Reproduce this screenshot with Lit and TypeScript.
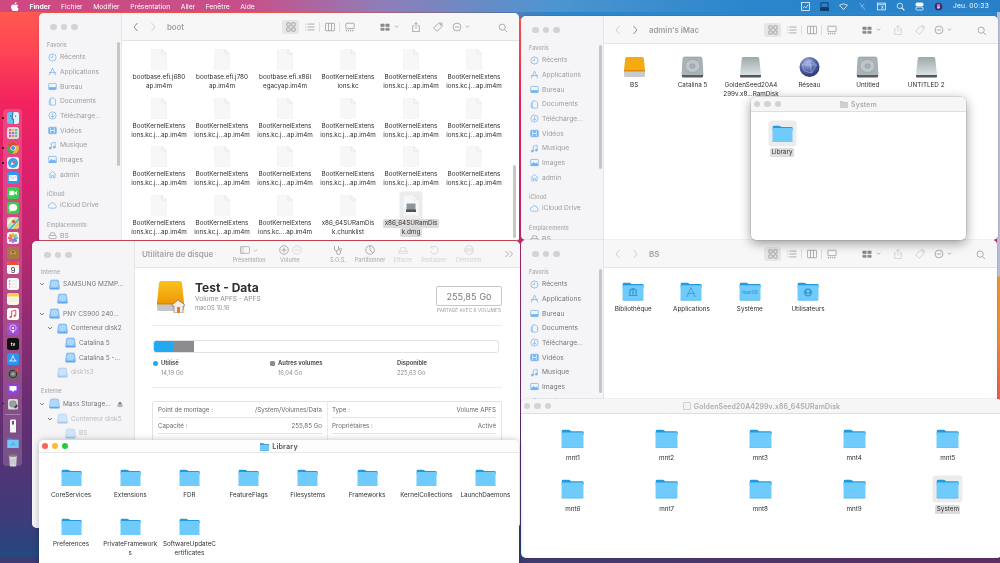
import { LitElement, html, svg, css, TemplateResult, SVGTemplateResult } from 'lit';
import { customElement } from 'lit/decorators.js';

type Item = { l: string[]; sel?: boolean };

const KC = ['BootKernelExtens', 'ions.kc.j...ap.im4m'];

const bootItems: Item[] = [
  ...Array(6).fill({ l: KC }),
  { l: ['bootbase.efi.j680', 'ap.im4m'] },
  { l: ['bootbase.efi.j780', 'ap.im4m'] },
  { l: ['bootbase.efi.x86l', 'egacyap.im4m'] },
  { l: ['BootKernelExtens', 'ions.kc'] },
  { l: KC },
  { l: KC },
  ...Array(14).fill({ l: KC }),
  { l: ['BootKernelExtens', 'ions.kc....ap.im4m'] },
  { l: ['x86_64SURamDis', 'k.chunklist'] },
  { l: ['x86_64SURamDis', 'k.dmg'], sel: true },
];

const libraryItems = [
  ['CoreServices'], ['Extensions'], ['FDR'], ['FeatureFlags'], ['Filesystems'], ['Frameworks'],
  ['KernelCollections'], ['LaunchDaemons'], ['Preferences'], ['PrivateFramework', 's'],
  ['SoftwareUpdateC', 'ertificates'],
];

const sidebarFav = ['Récents', 'Applications', 'Bureau', 'Documents', 'Télécharge...', 'Vidéos', 'Musique', 'Images', 'admin'];

const sideIcon = (name: string) => {
  const paths: Record<string, SVGTemplateResult> = {
    'Récents': svg`<circle cx="5" cy="5" r="4"/><path d="M5 2.600V5H3"/>`,
    'Applications': svg`<path d="M5 1.200 2 8M5 1.200 8 8M1 6.200h8M1 8.600h1.400M7.600 8.600H9"/>`,
    'Bureau': svg`<rect x=".8" y="1.600" width="8.400" height="6.800" rx=".8"/><rect x="1.400" y="6.200" width="7.200" height="1.800" fill="currentColor"/>`,
    'Documents': svg`<path d="M3.400 1.200h3L8.400 3v5.200a.8.8 0 0 1-.8.8H3.400a.8.8 0 0 1-.8-.8V2a.8.8 0 0 1 .8-.8z"/><path d="M2.600 3 1.400 3.600v4.600l1.600.8"/>`,
    'Télécharge...': svg`<circle cx="5" cy="5" r="4"/><path d="M5 2.600v4.600M3.200 5.400 5 7.200l1.800-1.800"/>`,
    'Vidéos': svg`<rect x=".8" y="1.400" width="8.400" height="7.200" rx=".8" fill="currentColor"/><path d="M3 2v6M7 2v6M3 5h4" stroke="#fff"/>`,
    'Musique': svg`<path d="M3.600 7.800V2.400l4.400-1v5.400"/><ellipse cx="2.600" cy="7.900" rx="1.200" ry="1" fill="currentColor"/><ellipse cx="7" cy="6.900" rx="1.200" ry="1" fill="currentColor"/>`,
    'Images': svg`<rect x=".8" y="1.600" width="8.400" height="6.800" rx=".6"/><path d="M1 8 3.800 4.600 5.600 6.600 7 5.400 9 7.600V8.300H1z" fill="currentColor"/>`,
    'admin': svg`<path d="M1 5.200 5 1.600l4 3.600M2.200 4.600V8.800H4V6.200h2v2.600h1.800V4.600"/>`,
    'iCloud Drive': svg`<path d="M2.800 8h4.800a1.900 1.900 0 0 0 .3-3.700A2.900 2.900 0 0 0 2.400 3.600 2.200 2.200 0 0 0 2.800 8z"/>`,
    'BS': svg`<rect x="1" y="5" width="8" height="3.400" rx=".6"/><path d="M2 5 3 2h4l1 3"/>`,
  };
  return html`<svg class="si ${name === 'BS' ? 'gray' : ''}" viewBox="0 0 10 10">${paths[name]}</svg>`;
};

const folder = (glyph?: string) => html`<svg class="folder" viewBox="0 0 64 54">
  <path d="M2 9V6q0-4 4-4h15q3 0 5 2l2 2h31q4 0 4 4v6H2z" fill="#239ade"/>
  <rect x="1.500" y="9.500" width="61" height="44" rx="3" fill="#6fcbfb"/>
  <path d="M2 51q0 2.500 3 2.500h54q3 0 3-2.500" fill="none" stroke="#4eaee6" stroke-width="1.500"/>
  ${glyph === 'lib' ? svg`<path d="M32 17l13 6v2H19v-2zM21 26h4v11h-4zM30 26h4v11h-4zM39 26h4v11h-4zM19 38h26v3H19z" fill="#3a9ad6"/>` : ''}
  ${glyph === 'app' ? svg`<path d="M32 16 22 40M32 16l10 24M20 33h24M18 41h6M40 41h6" stroke="#3a9ad6" stroke-width="2.400" fill="none"/>` : ''}
  ${glyph === 'sys' ? svg`<text x="32" y="35" text-anchor="middle" font-size="13" font-weight="700" font-family="Inter, sans-serif" fill="#3a9ad6">macOS</text>` : ''}
  ${glyph === 'usr' ? svg`<circle cx="32" cy="30" r="12" fill="#3a9ad6"/><circle cx="32" cy="27" r="4.500" fill="#6fcbfb"/><path d="M24 38q8-8 16 0" fill="#6fcbfb"/>` : ''}
</svg>`;

const doc = (dmg = false) => html`<svg class="doc" viewBox="0 0 32 42">
  <path d="M1 1h21l9 9v31H1z" fill="#f7f7f7" stroke="#efefef"/>
  <path d="M22 1.500v8.500h8.500z" fill="#fdfdfd" stroke="#d6d6d6" stroke-width="1"/>
  ${dmg ? svg`<rect x="7" y="17" width="18" height="15" rx="1.500" fill="#8c959b"/><rect x="6" y="29" width="20" height="5" rx="1" fill="#4d5256"/>` : ''}
</svg>`;

const drive = (kind: string) => {
  if (kind === 'orange') {
    return html`<svg class="drive" viewBox="0 0 46 44">
      <path d="M7 2h32q2 0 2.500 3L44 28H2L4.500 5Q5 2 7 2z" fill="#f4ab12"/>
      <path d="M2 28h42v11q0 3-3 3H5q-3 0-3-3z" fill="#c9cace"/>
      <path d="M2 28h42v3H2z" fill="#dc8c0c"/>
    </svg>`;
  }
  if (kind === 'globe') {
    return html`<svg class="drive" viewBox="0 0 46 44">
      <defs><radialGradient id="gl" cx=".4" cy=".3" r=".8"><stop offset="0" stop-color="#a9b9e6"/><stop offset=".55" stop-color="#4c5fa6"/><stop offset="1" stop-color="#1d2455"/></radialGradient></defs>
      <circle cx="23" cy="22" r="20" fill="url(#gl)"/>
      <path d="M8 18 23 8l14 10-10 16-14-4zM23 8l4 26M8 18l29 0" stroke="#d7def5" stroke-width=".8" fill="none"/>
    </svg>`;
  }
  if (kind === 'hdd') {
    return html`<svg class="drive" viewBox="0 0 46 44">
      <path d="M7 2h32q2.500 0 3 3l2 35H2L4 5q.5-3 3-3z" fill="#a9b3b8" stroke="#7d878c"/>
      <ellipse cx="23" cy="20" rx="15" ry="13" fill="#bcc6cb" stroke="#8b959a"/>
      <ellipse cx="23" cy="20" rx="5" ry="4.500" fill="#a9b3b8" stroke="#7d878c"/>
      <path d="M2 38h42v3q0 2-2 2H4q-2 0-2-2z" fill="#585d61"/>
    </svg>`;
  }
  return html`<svg class="drive" viewBox="0 0 46 44">
    <defs><linearGradient id="vg" x1="0" x2="0" y1="0" y2="1"><stop offset="0" stop-color="#9fa8a9"/><stop offset="1" stop-color="#d7e2e6"/></linearGradient></defs>
    <path d="M8 2h30q2 0 2.500 3L44 38H2L5.500 5Q6 2 8 2z" fill="url(#vg)"/>
    <path d="M2 38h42v3q0 2-2 2H4q-2 0-2-2z" fill="#55595a"/>
  </svg>`;
};

const blueDisk = (plain = false) => html`<svg class="bd" viewBox="0 0 22 22">
  <path d="M5 2h12q1.500 0 2 2l2 14H1L3 4q.5-2 2-2z" fill="${plain ? '#b4d8fa' : '#94c9f9'}" stroke="#5aa6f0"/>
  ${plain ? '' : svg`<ellipse cx="11" cy="10" rx="5.500" ry="4.500" fill="none" stroke="#eaf4ff" stroke-width="1.300"/><circle cx="11" cy="10" r="1.500" fill="#eaf4ff"/>`}
  <path d="M1 18h20v1.500q0 1.500-1.500 1.500h-17Q1 21 1 19.500z" fill="#5aa6f0"/>
</svg>`;

const dockIcons: TemplateResult[] = [
  html`<svg viewBox="0 0 12 12"><rect width="12" height="12" rx="2.500" fill="#5fc3f6"/><path d="M6 0h3.500Q12 0 12 2.500v7Q12 12 9.500 12H6z" fill="#dff1fb"/><path d="M6 0 5 7h1.500L6.500 12" fill="none" stroke="#24436b" stroke-width=".7"/><circle cx="3.500" cy="4" r=".6" fill="#24436b"/><circle cx="8.500" cy="4" r=".6" fill="#24436b"/></svg>`,
  html`<svg viewBox="0 0 12 12"><rect width="12" height="12" rx="2.500" fill="#e4dbe3"/><rect x="2" y="2" width="2.200" height="2.200" fill="#ef6a62"/><rect x="5" y="2" width="2.200" height="2.200" fill="#f3b33f"/><rect x="8" y="2" width="2.200" height="2.200" fill="#6cc45b"/><rect x="2" y="5" width="2.200" height="2.200" fill="#e2589a"/><rect x="5" y="5" width="2.200" height="2.200" fill="#5a8ce8"/><rect x="8" y="5" width="2.200" height="2.200" fill="#49bdd1"/><rect x="2" y="8" width="2.200" height="2.200" fill="#9a6be0"/><rect x="5" y="8" width="2.200" height="2.200" fill="#ef8e4a"/><rect x="8" y="8" width="2.200" height="2.200" fill="#6cc45b"/></svg>`,
  html`<svg viewBox="0 0 12 12"><circle cx="6" cy="6" r="6" fill="#e2b93b"/><path d="M6 0a6 6 0 0 0-5.200 3L3.500 8 6 3.500h5.200A6 6 0 0 0 6 0z" fill="#d9473e"/><path d="M.8 3a6 6 0 0 0 4.400 9L8 7.500 3.500 8z" fill="#3aa757"/><circle cx="6" cy="6" r="2.600" fill="#fff"/><circle cx="6" cy="6" r="2" fill="#4a8af4"/></svg>`,
  html`<svg viewBox="0 0 12 12"><rect width="12" height="12" rx="2.500" fill="#eef3f8"/><circle cx="6" cy="6" r="5" fill="#3aa2ec"/><path d="M8.500 3.500 5 5 3.500 8.500 7 7z" fill="#fff"/><path d="M8.500 3.500 5 5l2 2z" fill="#e8473e"/></svg>`,
  html`<svg viewBox="0 0 12 12"><rect width="12" height="12" rx="2.500" fill="#2a9bf0"/><rect x="1.800" y="3" width="8.400" height="6" rx=".6" fill="#f5f8fc"/><path d="M1.800 3.400 6 6.600l4.200-3.200" fill="none" stroke="#8bb0d6" stroke-width=".6"/></svg>`,
  html`<svg viewBox="0 0 12 12"><rect width="12" height="12" rx="2.500" fill="#37cd4e"/><rect x="2" y="3.800" width="5.400" height="4.400" rx="1" fill="#fff"/><path d="M7.800 5.500 10 4v4L7.800 6.500z" fill="#fff"/></svg>`,
  html`<svg viewBox="0 0 12 12"><rect width="12" height="12" rx="2.500" fill="#3ccb4e"/><ellipse cx="6" cy="5.600" rx="4.200" ry="3.500" fill="#fff"/><path d="M3 8 2.600 10 5 8.800z" fill="#fff"/></svg>`,
  html`<svg viewBox="0 0 12 12"><rect width="12" height="12" rx="2.500" fill="#bfe6a6"/><path d="M0 5 5 0h3L0 9z" fill="#f5f1e4"/><path d="M6 12 12 4v4l-3 4z" fill="#f3c64a"/><path d="M3 12 12 2" stroke="#4a9bed" stroke-width="1.200"/><circle cx="6.500" cy="4.500" r="1.600" fill="#e2483f"/></svg>`,
  html`<svg viewBox="0 0 12 12"><rect width="12" height="12" rx="2.500" fill="#f7f4f6"/><g opacity=".9"><ellipse cx="6" cy="3" rx="1.400" ry="2.300" fill="#f2b033"/><ellipse cx="9" cy="6" rx="2.300" ry="1.400" fill="#57b3e6"/><ellipse cx="6" cy="9" rx="1.400" ry="2.300" fill="#a66bd6"/><ellipse cx="3" cy="6" rx="2.300" ry="1.400" fill="#e85a50"/><ellipse cx="8.100" cy="3.900" rx="1.400" ry="2.300" transform="rotate(45 8.100 3.900)" fill="#8cc850"/><ellipse cx="8.100" cy="8.100" rx="1.400" ry="2.300" transform="rotate(-45 8.100 8.100)" fill="#4f7be0"/><ellipse cx="3.900" cy="8.100" rx="1.400" ry="2.300" transform="rotate(45 3.900 8.100)" fill="#e2599d"/><ellipse cx="3.900" cy="3.900" rx="1.400" ry="2.300" transform="rotate(-45 3.900 3.900)" fill="#ef8a3c"/></g></svg>`,
  html`<svg viewBox="0 0 12 12"><rect width="12" height="12" rx="2" fill="#a9773f"/><circle cx="6" cy="6" r="3.400" fill="#c4975f" stroke="#8a5f2e" stroke-width=".5"/><circle cx="6" cy="5" r="1.300" fill="#8a5f2e"/><path d="M3.800 8.400q2.200-2.500 4.400 0" fill="#8a5f2e"/></svg>`,
  html`<svg viewBox="0 0 12 12"><rect width="12" height="12" rx="2.500" fill="#fafafa"/><path d="M0 2.500Q0 0 2.500 0h7Q12 0 12 2.500V3H0z" fill="#ee4b3f"/><text x="6" y="10.500" text-anchor="middle" font-size="7.500" font-family="Inter, sans-serif" fill="#222">9</text></svg>`,
  html`<svg viewBox="0 0 12 12"><rect width="12" height="12" rx="2.500" fill="#fafafa"/><circle cx="2.600" cy="3" r=".8" fill="#3a8dee"/><circle cx="2.600" cy="6" r=".8" fill="#ee5f4d"/><circle cx="2.600" cy="9" r=".8" fill="#f0a936"/><path d="M4.500 3H10M4.500 6H10M4.500 9H10" stroke="#c9c9c9" stroke-width=".5"/></svg>`,
  html`<svg viewBox="0 0 12 12"><rect width="12" height="12" rx="2.500" fill="#fbf7e8"/><path d="M0 2.500Q0 0 2.500 0h7Q12 0 12 2.500V3.600H0z" fill="#f6cf45"/><path d="M1 6h10M1 8h10" stroke="#dcd8c9" stroke-width=".4"/></svg>`,
  html`<svg viewBox="0 0 12 12"><rect width="12" height="12" rx="2.500" fill="#fdfdfd"/><path d="M4.600 8.800V3.200l4.200-1v5.500" fill="none" stroke="#f0384e" stroke-width=".9"/><ellipse cx="3.600" cy="8.900" rx="1.200" ry="1" fill="#f0384e"/><ellipse cx="7.700" cy="7.800" rx="1.200" ry="1" fill="#f0384e"/></svg>`,
  html`<svg viewBox="0 0 12 12"><rect width="12" height="12" rx="2.500" fill="#a34ed8"/><path d="M5.200 7h1.600l-.3 3h-1z" fill="#fff"/><circle cx="6" cy="5" r="3.200" fill="none" stroke="#fff" stroke-width=".6"/><circle cx="6" cy="5" r="1.100" fill="#fff"/></svg>`,
  html`<svg viewBox="0 0 12 12"><rect width="12" height="12" rx="2.500" fill="#111"/><text x="6" y="8" text-anchor="middle" font-size="4.500" font-weight="700" font-family="Inter, sans-serif" fill="#fff">tv</text></svg>`,
  html`<svg viewBox="0 0 12 12"><rect width="12" height="12" rx="2.500" fill="#2c93f1"/><path d="M6.300 2.500 3.400 8M5.400 2.500 8.600 8M2.400 8H9.600" stroke="#fff" stroke-width=".8" fill="none"/></svg>`,
  html`<svg viewBox="0 0 12 12"><circle cx="6" cy="6" r="5.800" fill="#6e6e72"/><circle cx="6" cy="6" r="3.800" fill="none" stroke="#2e2e30" stroke-width="1.100"/><circle cx="6" cy="6" r="1.600" fill="#a9a9ad"/><circle cx="9.800" cy="2.200" r="1.900" fill="#ee3f36"/></svg>`,
  html`<svg viewBox="0 0 12 12"><rect width="12" height="12" rx="2.500" fill="#8e44cf"/><path d="M2.500 3h7v4.500H7L6 9.500 5 7.500H2.500z" fill="#fff"/></svg>`,
  html`<svg viewBox="0 0 12 12"><rect x="1" y="1" width="10" height="10.500" rx="1.500" fill="#d9d9d9"/><ellipse cx="6" cy="6" rx="3.400" ry="3.200" fill="#9ba3a6" stroke="#5c6366" stroke-width=".4"/><path d="M7 9.500 9.500 6.500l1.500 1-2 3z" fill="#3c4145"/></svg>`,
];

const dockTail = [
  html`<svg viewBox="0 0 12 14"><path d="M3 1.500Q3 .5 4 .5h4q1 0 1 1V13q0 .5-.5.5h-5Q3 13.500 3 13z" fill="#f4f4f4"/><rect x="5" y="2" width="2" height="3.500" fill="#5b5b5b"/></svg>`,
  html`<svg viewBox="0 0 13 12"><path d="M.5 2Q.500 1 1.500 1h3.500l1 1h6q.500 0 .500 1v1H.500z" fill="#2ba0e4"/><rect x=".3" y="2.800" width="12.400" height="8.700" rx=".6" fill="#72c9f8"/><path d="M6.500 4.500 4.500 9M6.500 4.500 8.500 9M4 7.800H9" stroke="#3b9ad8" stroke-width=".5" fill="none"/></svg>`,
  html`<svg viewBox="0 0 12 14"><path d="M2 2h8l-.8 10.500q0 1-1 1H3.800q-1 0-1-1z" fill="#d8d8da" stroke="#8b8b90" stroke-width=".3"/><path d="M4 5.500l.3 6M6 5.500v6M8 5.500l-.3 6" stroke="#9b9ba0" stroke-width=".4"/><ellipse cx="6" cy="2.200" rx="4.300" ry="1.500" fill="#75757a"/><path d="M3.500 2.600h5" stroke="#e85a50" stroke-width=".6"/></svg>`,
];

const tb = (name: string, on = true) => {
  const shapes: Record<string, TemplateResult> = {
    grid: html`<svg class="tic" viewBox="0 0 12 12"><rect x="1" y="1" width="4" height="4" rx=".5"/><rect x="7" y="1" width="4" height="4" rx=".5"/><rect x="1" y="7" width="4" height="4" rx=".5"/><rect x="7" y="7" width="4" height="4" rx=".5"/></svg>`,
    list: html`<svg class="tic" viewBox="0 0 12 12"><path d="M3 2.500h8.500M3 6h8.500M3 9.500h8.500M.5 2.500h1M.5 6h1M.5 9.500h1"/></svg>`,
    cols: html`<svg class="tic" viewBox="0 0 12 12"><rect x=".5" y="1.500" width="11" height="9" rx=".8"/><path d="M4.200 1.500v9M7.800 1.500v9"/></svg>`,
    gallery: html`<svg class="tic" viewBox="0 0 12 12"><rect x="1" y="1.500" width="10" height="6.500" rx=".7"/><path d="M1 10.500h1.400M3.500 10.500h1.400M6 10.500h1.400M8.500 10.500h1.400" stroke-width="1.200"/></svg>`,
    group: html`<svg class="tic" viewBox="0 0 12 12"><path d="M1 2.500h4v3H1zM7 2.500h4v3H7zM1 7.500h4v2.500H1zM7 7.500h4v2.500H7z" fill="currentColor"/></svg>`,
    caret: html`<svg class="tic caret" viewBox="0 0 6 6"><path d="M1 2l2 2 2-2"/></svg>`,
    share: html`<svg class="tic" viewBox="0 0 12 12"><path d="M3.500 4.500H2v7h8v-7H8.500M6 8V.7M4 2.500 6 .7l2 1.800"/></svg>`,
    tag: html`<svg class="tic" viewBox="0 0 12 12"><path d="M7 1.200h3.300q.6 0 .6.6V5L5.400 10.900q-.4.400-.8 0L1.100 7.400q-.4-.4 0-.8z"/><circle cx="8.900" cy="3.200" r=".6"/></svg>`,
    action: html`<svg class="tic" viewBox="0 0 12 12"><circle cx="6" cy="6" r="4.700"/><path d="M3.500 6h5"/></svg>`,
    search: html`<svg class="tic" viewBox="0 0 12 12"><circle cx="5" cy="5" r="3.700"/><path d="M7.800 7.800 11 11"/></svg>`,
  };
  return html`<span class="tb ${on ? '' : 'off'}">${shapes[name]}</span>`;
};

@customElement('app-root')
export class AppRoot extends LitElement {
  static styles = css`
    :host {
      display: block;
      width: 1000px;
      height: 563px;
      overflow: hidden;
      font-family: Inter, 'Liberation Sans', sans-serif;
      color: #333;
    }
    .desk {
      position: relative;
      width: 1000px;
      height: 563px;
      overflow: hidden;
      filter: blur(.35px);
      background:
        linear-gradient(180deg, #b6bcd3 0, #b6bcd3 276px, #e8932f 277px, #e88b3a 335px, #e65c45 400px, #5b2f62 401px) right / 3px 100% no-repeat,
        linear-gradient(90deg, #3f3a72 520px, #5c2f60 1000px) 0 558px / 100% 5px no-repeat,
        linear-gradient(90deg, transparent 280px, #2b86cc 560px) 0 0 / 100% 18px no-repeat,
        linear-gradient(180deg, #ff5f4e 0, #ff4554 50px, #f2235f 100px, #de1f6c 170px, #c0276f 240px, #8a2c73 330px, #5e2f72 430px, #423a7a 510px, #204a80 563px);
    }
    .menubar {
      position: absolute;
      inset: 0 0 auto 0;
      height: 12px;
      display: flex;
      align-items: center;
      gap: 10.500px;
      padding: 0 11px;
      box-sizing: border-box;
      color: #fff;
      font-size: 6.750px;
      z-index: 20;
      background: linear-gradient(90deg, #cf4880 0, #c7508a 25%, #8f7db8 38%, #4d95d0 55%, #2a86cc 75%, #2a80c8 100%);
    }
    .menubar .bold { font-weight: 700; }
    .menubar .apple { width: 8px; height: 9px; fill: #fff; }
    .status { margin-left: auto; display: flex; align-items: center; gap: 10px; }
    .status svg { width: 9px; height: 9px; display: block; fill: none; stroke: #fff; stroke-width: .8; }
    .status svg.ink { stroke: #123a63; stroke-width: 1; }
    .status svg.dim { stroke: #9ec6e8; }
    .status svg.siri { stroke: none; }
    .status .clock { font-size: 6.700px; letter-spacing: .2px; }

    .dock {
      position: absolute;
      left: 3px;
      top: 109px;
      width: 19px;
      height: 357px;
      box-sizing: border-box;
      padding-top: 3px;
      border-radius: 4px;
      background: rgba(255, 190, 220, .22);
      display: flex;
      flex-direction: column;
      align-items: center;
      gap: 3.050px;
      z-index: 1;
    }
    .dock .di { position: relative; width: 12px; height: 12px; flex: none; }
    .dock svg { width: 12px; height: 12px; display: block; }
    .dock .run::before {
      content: '';
      position: absolute;
      left: -4.500px;
      top: 5px;
      width: 1.500px;
      height: 1.500px;
      border-radius: 50%;
      background: #1b1b1f;
    }
    .dock .sep { width: 15px; height: 1px; background: rgba(255, 255, 255, .3); margin: 1px 0; flex: none; }
    .dock .tail { height: 14px; }
    .dock .tail svg { height: 14px; }

    .win {
      position: absolute;
      background: #fff;
      border-radius: 5px;
      overflow: hidden;
      display: flex;
      box-shadow: 0 0 0 .5px rgba(0, 0, 0, .12);
    }
    .col { flex-direction: column; }
    .w-admin { left: 521px; top: 16px; width: 477px; height: 224px; z-index: 2; }
    .w-boot { left: 39px; top: 13px; width: 480px; height: 227px; z-index: 3; border-bottom: 1px solid #cb4a55; border-radius: 5px 5px 2px 2px; }
    .w-disk { left: 32px; top: 241px; width: 488px; height: 287px; z-index: 4; }
    .w-bs { left: 521px; top: 240px; width: 476px; height: 165px; z-index: 5; }
    .w-system { left: 751px; top: 97px; width: 215px; height: 143px; z-index: 6; box-shadow: 0 3px 12px rgba(0, 0, 0, .4), 0 0 0 .5px rgba(0, 0, 0, .15); }
    .w-golden { left: 521px; top: 399px; width: 481px; height: 159px; z-index: 7; }
    .w-library { left: 39px; top: 440px; width: 480px; height: 135px; z-index: 8; box-shadow: 0 0 6px rgba(0, 0, 0, .25); }

    .sidebar {
      position: relative;
      flex: none;
      width: 83px;
      box-sizing: border-box;
      background: #f5f4f6;
      border-right: 1px solid #e6e6e6;
      overflow: hidden;
      color: #9c9ca0;
      font-size: 6.700px;
    }
    .sidebar.dark { color: #77777c; }
    .lights { display: flex; gap: 4px; padding-left: 11px; height: 28px; align-items: center; }
    .lights i { width: 6.500px; height: 6.500px; border-radius: 50%; background: #d4d3d4; display: block; }
    .slabel { height: 8px; line-height: 8px; padding-left: 8px; font-size: 5.600px; font-weight: 600; color: #b0b0b3; margin: 8px 0 0; }
    .slabel.first { margin: 0 0 1px; }
    .srow { display: flex; align-items: center; height: 14.670px; padding-left: 8.500px; gap: 3.500px; white-space: nowrap; }
    .si { width: 9px; height: 9px; flex: none; fill: none; stroke: currentColor; stroke-width: .8; color: #6fb4f4; }
    .si.gray { color: #a0a0a4; }
    .thumb { position: absolute; left: 77.500px; width: 3.500px; border-radius: 2px; background: #c6c6c6; top: 29px; height: 124px; }

    .main { flex: 1; min-width: 0; display: flex; flex-direction: column; }
    .toolbar {
      flex: none;
      height: 28px;
      box-sizing: border-box;
      display: flex;
      align-items: center;
      background: #f7f7f7;
      border-bottom: 1px solid #e3e3e3;
      padding-right: 11px;
      color: #8a8a8a;
    }
    .nav { width: 160px; flex: none; display: flex; align-items: center; padding-left: 10px; box-sizing: border-box; }
    .nav svg { width: 8px; height: 10px; fill: none; stroke: #8d8d8d; stroke-width: 1; margin-right: 9px; }
    .nav svg.dim { stroke: #cfcfcf; }
    .nav b { font-size: 7.800px; font-weight: 600; color: #a0a0a2; margin-left: 1px; white-space: nowrap; }
    .views { display: flex; align-items: center; }
    .vbtn { width: 17px; height: 14px; border-radius: 3px; display: flex; align-items: center; justify-content: center; }
    .vbtn.on { background: #e6e6e6; margin-right: 1px; }
    .vbtn.w { width: 19px; }
    .vsep { width: 1px; height: 10px; background: #dcdcdc; }
    .tb { display: inline-flex; color: #8a8a8a; }
    .tb.off { color: #c4c4c4; }
    .tic { width: 10px; height: 10px; fill: none; stroke: currentColor; stroke-width: .8; display: block; }
    .caret { width: 5px; height: 5px; }
    .tools { display: flex; align-items: center; gap: 12px; margin-left: 21px; }
    .pair { display: flex; align-items: center; gap: 3.500px; }
    .pair:last-child { margin-left: -3px; }
    .search { margin-left: auto; }
    .content { flex: 1; min-height: 0; overflow: hidden; position: relative; }
    .vscroll { position: absolute; right: 3px; width: 3.500px; border-radius: 2px; background: #c8c8c8; top: 124px; bottom: 2px; }

    .titlebar {
      flex: none;
      display: flex;
      align-items: center;
      justify-content: center;
      gap: 3px;
      position: relative;
      height: 15px;
      box-sizing: border-box;
      background: #f6f6f6;
      border-bottom: 1px solid #dedede;
      font-size: 6.900px;
      font-weight: 600;
      color: #acacac;
      letter-spacing: .15px;
    }
    .titlebar .lights { position: absolute; left: 0; top: 0; height: 14px; padding-left: 2.500px; }
    .titlebar svg.tf { width: 8px; height: 8px; }
    .titlebar svg.blue { width: 9px; height: 9px; }
    .titlebar.live { background: #fdfdfd; color: #555; border-bottom-color: #e8e8e8; height: 13px; font-size: 7.200px; }
    .titlebar.live .lights { height: 12px; gap: 3.500px; }
    .titlebar.live .lights i:nth-child(1) { background: #ff5f57; }
    .titlebar.live .lights i:nth-child(2) { background: #febb2e; }
    .titlebar.live .lights i:nth-child(3) { background: #28c840; }

    .grid { display: grid; }
    .item { display: flex; flex-direction: column; align-items: center; font-size: 6.300px; line-height: 9px; color: #2e2e2e; white-space: nowrap; min-width: 0; }
    .ic { display: flex; align-items: center; justify-content: center; flex: none; }
    .lb { display: flex; flex-direction: column; align-items: center; }
    .lb span { display: block; padding: 0 1.500px; border-radius: 1.500px; }
    .sel .ic { background: #ececec; box-shadow: 0 0 0 3.500px #ececec; border-radius: 1px; }
    .sel .lb span { background: #dcdcdc; color: #333; }
    .doc { width: 16px; height: 21px; display: block; }
    .folder { width: 100%; display: block; }
    .drive { width: 23px; height: 22px; display: block; }

    .g-boot { grid-template-columns: repeat(6, 63px); grid-auto-rows: 48.600px; padding-left: 5.500px; margin-top: -40.600px; }
    .g-boot .ic { width: 16px; height: 21px; margin-bottom: 3px; }

    .g-admin { grid-template-columns: repeat(6, 58.400px); padding: 12px 0 0 1px; }
    .g-admin .ic { height: 22px; margin-bottom: 3px; }

    .g-bs { grid-template-columns: repeat(4, 58.300px); padding-top: 14px; }
    .g-bs .ic { width: 22px; height: 19px; margin-bottom: 4px; }

    .g-golden { grid-template-columns: repeat(5, 93.750px); grid-auto-rows: 50.700px; padding: 14.500px 0 0 5px; }
    .g-golden .ic { width: 23px; height: 20px; margin-bottom: 5.500px; }

    .g-lib { grid-template-columns: repeat(8, 59.200px); grid-auto-rows: 49px; padding: 15px 0 0 2.500px; }
    .g-lib .ic { width: 21px; height: 19px; margin-bottom: 3.500px; }

    .g-sys { padding: 10px 0 0 18px; grid-template-columns: 26px; }
    .g-sys .ic { width: 21px; height: 19px; margin: 2px 0 5px; }

    /* disk utility */
    .ds { flex: none; width: 103px; position: relative; box-sizing: border-box; background: #f5f4f6; border-right: 1px solid #e6e6e6; font-size: 6.500px; color: #77777b; overflow: hidden; }
    .ds .lights { padding-left: 12px; height: 28px; }
    .ds .slabel { padding-left: 9px; margin: 8px 0 2px; height: 7px; line-height: 7px; }
    .ds .slabel.first { margin: 0 0 1px; }
    .tree { display: flex; align-items: center; height: 14.670px; white-space: nowrap; position: relative; }
    .tree.faded { color: #bcbcc0; }
    .tree.faded .bd { opacity: .55; }
    .chev { width: 6px; height: 6px; flex: none; fill: none; stroke: #77777b; stroke-width: .9; margin-right: 4px; }
    .chev.none { stroke: none; }
    .bd { width: 11px; height: 11px; flex: none; margin-right: 3px; }
    .eject { position: absolute; right: 11px; top: 4px; width: 6px; height: 6px; fill: #77777b; }
    .dtool { flex: none; height: 27px; box-sizing: border-box; display: flex; align-items: center; background: #f7f7f7; border-bottom: 1px solid #e3e3e3; }
    .dtitle { width: 90px; box-sizing: border-box; padding-left: 7px; font-size: 7.900px; font-weight: 600; color: #a4a4a6; white-space: nowrap; flex: none; }
    .dbtn { flex: none; display: flex; flex-direction: column; align-items: center; gap: 1px; font-size: 5.600px; color: #a8a8aa; line-height: 7px; white-space: nowrap; }
    .dbtn .art { height: 11px; display: flex; align-items: center; gap: 3px; color: #9d9d9f; }
    .dbtn.off, .dbtn.off .art { color: #d2d2d4; }
    .dbtn svg { width: 10px; height: 10px; fill: none; stroke: currentColor; stroke-width: .8; display: block; }
    .dbtn svg.c { width: 5px; height: 5px; }
    .dbtn svg.pale { color: #d2d2d4; }
    .w48 { width: 48px; }
    .w34 { width: 34px; }
    .w30 { width: 30px; }
    .w32 { width: 32px; }
    .w40 { width: 40px; }
    .gap16 { margin-left: 16px; }
    .dbody { padding: 13px 18px 0 17px; flex: 1; overflow: hidden; background: #fff; }
    .head { display: flex; height: 45px; box-sizing: border-box; border-bottom: 1px solid #ececec; padding-left: 4px; }
    .hdd { width: 29px; height: 32px; flex: none; margin-right: 10px; }
    .htext { flex: 1; min-width: 0; }
    .htext h1 { margin: 0; font-size: 12px; line-height: 13px; font-weight: 700; color: #2f2f2f; }
    .htext p { margin: 0; color: #8d8d8d; }
    .htext .v { font-size: 6.600px; line-height: 9px; margin-top: 1px; }
    .htext .o { font-size: 5.800px; line-height: 8px; }
    .size { flex: none; display: flex; flex-direction: column; align-items: center; margin-top: 5px; }
    .size .box { width: 66px; height: 20px; box-sizing: border-box; border: 1px solid #c7c7c7; border-radius: 2px; display: flex; align-items: center; justify-content: center; font-size: 9.200px; color: #7c7c7c; }
    .size small { font-size: 4.600px; line-height: 8px; margin-top: 1px; color: #9a9a9a; letter-spacing: .1px; white-space: nowrap; }
    .bar { display: flex; height: 13px; width: 346px; margin: 14px 0 0 1px; box-sizing: border-box; border: 1px solid #e2e2e2; border-radius: 3px; overflow: hidden; }
    .bar .a { width: 19px; background: #21aaf2; }
    .bar .b { width: 21px; background: #8c8c8e; }
    .legend { display: grid; grid-template-columns: 117px 127px 100px; height: 35px; box-sizing: border-box; padding: 6px 0 0 1px; border-bottom: 1px solid #ececec; font-size: 5.800px; line-height: 8px; color: #8e8e8e; margin-bottom: 13px; }
    .legend b { display: flex; align-items: center; gap: 3px; color: #555; font-weight: 700; }
    .legend .sw { width: 5px; height: 5px; border-radius: 50%; flex: none; background: #21aaf2; }
    .legend .sq { border-radius: 1.500px; background: #8c8c8e; }
    .legend .v { padding: 2px 0 0 8px; display: block; }
    .legend .flush { padding-left: 0; }
    .table { display: grid; grid-template-columns: 1fr 1fr; border: 1px solid #e3e3e3; border-radius: 2px; padding: 0 5px; column-gap: 10px; font-size: 6.200px; color: #6a6a6a; }
    .trow { display: flex; justify-content: space-between; height: 16px; align-items: center; border-bottom: 1px solid #e5e5e5; box-sizing: border-box; }
    .table > div:nth-child(odd) { position: relative; }
    .table > div:nth-child(odd)::after { content: ''; position: absolute; right: -5.500px; top: 0; bottom: -1px; width: 1px; background: #ececec; }
  `;

  private sidebar(dark = false) {
    return html`<div class="sidebar ${dark ? 'dark' : ''}">
      <div class="lights"><i></i><i></i><i></i></div>
      <div class="slabel first">Favoris</div>
      ${sidebarFav.map((n) => html`<div class="srow">${sideIcon(n)}<span>${n}</span></div>`)}
      <div class="slabel">iCloud</div>
      <div class="srow">${sideIcon('iCloud Drive')}<span>iCloud Drive</span></div>
      <div class="slabel">Emplacements</div>
      <div class="srow">${sideIcon('BS')}<span>BS</span></div>
      <div class="thumb"></div>
    </div>`;
  }

  private toolbar(title: string, back: boolean, fwd: boolean, share: boolean) {
    return html`<div class="toolbar">
      <div class="nav">
        <svg class="${back ? '' : 'dim'}" viewBox="0 0 8 10"><path d="M5.500 1 2 5l3.500 4"/></svg>
        <svg class="${fwd ? '' : 'dim'}" viewBox="0 0 8 10"><path d="M2.500 1 6 5 2.500 9"/></svg>
        <b>${title}</b>
      </div>
      <div class="views">
        <span class="vbtn on">${tb('grid')}</span>
        <span class="vbtn w">${tb('list')}</span>
        <span class="vsep"></span>
        <span class="vbtn w">${tb('cols')}</span>
        <span class="vsep"></span>
        <span class="vbtn w">${tb('gallery')}</span>
      </div>
      <div class="tools">
        <span class="pair">${tb('group')}${tb('caret')}</span>
        ${tb('share', share)}
        ${tb('tag', share)}
        <span class="pair">${tb('action')}${tb('caret')}</span>
      </div>
      <span class="search">${tb('search')}</span>
    </div>`;
  }

  private item(icon: TemplateResult, lines: string[], sel = false) {
    return html`<div class="item ${sel ? 'sel' : ''}">
      <div class="ic">${icon}</div>
      <div class="lb">${lines.map((t) => html`<span>${t}</span>`)}</div>
    </div>`;
  }

  private tree(level: number, label: string, opts: { chev?: boolean; plain?: boolean; faded?: boolean; eject?: boolean } = {}) {
    const pad = 7 + level * 8;
    return html`<div class="tree ${opts.faded ? 'faded' : ''}" style="padding-left:${pad}px">
      <svg class="chev ${opts.chev ? '' : 'none'}" viewBox="0 0 6 6"><path d="M1 2l2 2 2-2"/></svg>
      ${blueDisk(opts.plain)}<span>${label}</span>
      ${opts.eject ? html`<svg class="eject" viewBox="0 0 6 6"><path d="M3 .5 5.500 3.500H.5zM.5 4.500h5v1h-5z"/></svg>` : ''}
    </div>`;
  }

  private bootWin() {
    return html`<div class="win w-boot">
      ${this.sidebar()}
      <div class="main">
        ${this.toolbar('boot', true, false, true)}
        <div class="content">
          <div class="grid g-boot">
            ${bootItems.map((it) => this.item(doc(it.sel), it.l, it.sel))}
          </div>
          <div class="vscroll"></div>
        </div>
      </div>
    </div>`;
  }

  private adminWin() {
    const vols: [string, string[]][] = [
      ['orange', ['BS']],
      ['hdd', ['Catalina 5']],
      ['vol', ['GoldenSeed20A4', '299v.x8...RamDisk']],
      ['globe', ['Réseau']],
      ['hdd', ['Untitled']],
      ['vol', ['UNTITLED 2']],
    ];
    return html`<div class="win w-admin">
      ${this.sidebar()}
      <div class="main">
        ${this.toolbar("admin's iMac", false, true, false)}
        <div class="content">
          <div class="grid g-admin">${vols.map(([k, l]) => this.item(drive(k), l))}</div>
        </div>
      </div>
    </div>`;
  }

  private bsWin() {
    const items: [string, string][] = [['lib', 'Bibliothèque'], ['app', 'Applications'], ['sys', 'Système'], ['usr', 'Utilisateurs']];
    return html`<div class="win w-bs">
      ${this.sidebar(true)}
      <div class="main">
        ${this.toolbar('BS', false, false, false)}
        <div class="content">
          <div class="grid g-bs">${items.map(([g, n]) => this.item(folder(g), [n]))}</div>
        </div>
      </div>
    </div>`;
  }

  private plainWin(cls: string, title: string, live: boolean, tf: TemplateResult, body: TemplateResult) {
    return html`<div class="win col ${cls}">
      <div class="titlebar ${live ? 'live' : ''}">
        <div class="lights"><i></i><i></i><i></i></div>
        ${tf}<span>${title}</span>
      </div>
      <div class="content">${body}</div>
    </div>`;
  }

  private diskWin() {
    return html`<div class="win w-disk">
      <div class="ds">
        <div class="lights"><i></i><i></i><i></i></div>
        <div class="slabel first">Interne</div>
        ${this.tree(0, 'SAMSUNG MZMP...', { chev: true })}
        ${this.tree(1, '')}
        ${this.tree(0, 'PNY CS900 240...', { chev: true })}
        ${this.tree(1, 'Conteneur disk2', { chev: true })}
        ${this.tree(2, 'Catalina 5')}
        ${this.tree(2, 'Catalina 5 -...')}
        ${this.tree(1, 'disk1s3', { faded: true })}
        <div class="slabel">Externe</div>
        ${this.tree(0, 'Mass Storage...', { chev: true, plain: true, eject: true })}
        ${this.tree(1, 'Conteneur disk5', { chev: true, plain: true, faded: true })}
        ${this.tree(2, 'BS', { plain: true, faded: true })}
      </div>
      <div class="main">
        <div class="dtool">
          <div class="dtitle">Utilitaire de disque</div>
          <div class="dbtn w48"><span class="art"><svg viewBox="0 0 12 10"><rect x=".5" y="1" width="11" height="8" rx="1"/><rect x=".5" y="1" width="4" height="8" fill="currentColor" opacity=".25"/></svg><svg class="c" viewBox="0 0 6 6"><path d="M1 2l2 2 2-2"/></svg></span>Présentation</div>
          <div class="dbtn w34"><span class="art"><svg viewBox="0 0 10 10"><circle cx="5" cy="5" r="4.300"/><path d="M5 2.500v5M2.500 5h5"/></svg><svg class="pale" viewBox="0 0 10 10"><circle cx="5" cy="5" r="4.300"/><path d="M2.500 5h5"/></svg></span>Volume</div>
          <div class="dbtn w30 gap16"><span class="art"><svg viewBox="0 0 10 10"><path d="M1.500 1v3a2 2 0 0 0 4 0V1M3.500 6v1.500a2 2 0 0 0 4 0V6"/><circle cx="7.500" cy="4.500" r="1.200"/></svg></span>S.O.S.</div>
          <div class="dbtn w34"><span class="art"><svg viewBox="0 0 10 10"><circle cx="5" cy="5" r="4.300"/><path d="M5 .7V5l3 3"/></svg></span>Partitionner</div>
          <div class="dbtn w32 off"><span class="art"><svg viewBox="0 0 12 10"><path d="M1 6.500h10v2.500H1zM2 6.500 3.500 2h5L10 6.500"/></svg></span>Effacer</div>
          <div class="dbtn w30 off"><span class="art"><svg viewBox="0 0 10 10"><path d="M2.200 3a3.800 3.800 0 1 1-.6 3M2.200.8V3h2.200"/></svg></span>Restaurer</div>
          <div class="dbtn w40 off"><span class="art"><svg viewBox="0 0 10 10"><circle cx="5" cy="5" r="4.300"/><path d="M1 4h8M1 6h8"/></svg></span>Démonter</div>
          <div class="dbtn w40"><span class="art"><svg viewBox="0 0 10 10"><path d="M1.500 2 4.500 5l-3 3M5.500 2l3 3-3 3"/></svg></span></div>
        </div>
        <div class="dbody">
          <div class="head">
            <svg class="hdd" viewBox="0 0 29 32">
              <defs><linearGradient id="hy" x1="0" x2="0" y1="0" y2="1"><stop offset="0" stop-color="#fbc21e"/><stop offset="1" stop-color="#ed9907"/></linearGradient></defs>
              <path d="M5 0h19q1.500 0 2 2l2 20H1L3 2q.5-2 2-2z" fill="url(#hy)"/>
              <path d="M1 22h27v6q0 2-2 2H3q-2 0-2-2z" fill="#c5c6c9"/>
              <path d="M1 22h27v1.500H1z" fill="#d88907"/>
              <path d="M16 24 22 19l7 5v1h-2v7H18v-7h-2z" fill="#eeeeee" stroke="#8a6a45" stroke-width=".6"/>
              <rect x="21" y="26" width="3" height="6" fill="#e67f1a"/>
            </svg>
            <div class="htext">
              <h1>Test - Data</h1>
              <p class="v">Volume APFS - APFS</p>
              <p class="o">macOS 10.16</p>
            </div>
            <div class="size">
              <div class="box">255,85 Go</div>
              <small>PARTAGÉ AVEC 6 VOLUMES</small>
            </div>
          </div>
          <div class="bar"><div class="a"></div><div class="b"></div></div>
          <div class="legend">
            <div><b><i class="sw"></i>Utilisé</b><span class="v">14,19 Go</span></div>
            <div><b><i class="sw sq"></i>Autres volumes</b><span class="v">16,04 Go</span></div>
            <div><b>Disponible</b><span class="v flush">225,63 Go</span></div>
          </div>
          <div class="table">
            <div class="trow"><span>Point de montage :</span><span>/System/Volumes/Data</span></div>
            <div class="trow"><span>Type :</span><span>Volume APFS</span></div>
            <div class="trow"><span>Capacité :</span><span>255,85 Go</span></div>
            <div class="trow"><span>Propriétaires :</span><span>Activé</span></div>
            <div class="trow"></div>
            <div class="trow"></div>
          </div>
        </div>
      </div>
    </div>`;
  }

  render() {
    const grayFolder = html`<svg class="tf" viewBox="0 0 12 11"><path d="M0 1.500h4.500l1 1H12V11H0z" fill="#bdbdbd"/><rect y="3" width="12" height="8" fill="#cfcfcf"/></svg>`;
    const dmgIcon = html`<svg class="tf" viewBox="0 0 10 10"><rect x=".5" y=".5" width="9" height="9" rx="1.500" fill="#f3f3f3" stroke="#a8a8a8" stroke-width=".7"/></svg>`;
    const blueFolder = html`<svg class="tf blue" viewBox="0 0 12 11"><path d="M0 1h4.500l1 1H12V11H0z" fill="#2a80c4"/><rect y="3" width="12" height="8" fill="#6fcbfb"/></svg>`;
    const mnt = ['mnt1', 'mnt2', 'mnt3', 'mnt4', 'mnt5', 'mnt6', 'mnt7', 'mnt8', 'mnt9'];
    return html`<div class="desk">
      <div class="menubar">
        <svg class="apple" viewBox="0 0 16 18"><path d="M11.200 0c.1 1.300-.4 2.400-1.100 3.200-.8.900-1.900 1.500-3 1.400-.1-1.200.5-2.400 1.100-3.100C9 .700 10.200.1 11.200 0zM14.800 6.100c-1.500.9-2.200 2.100-2.100 3.700.1 1.800 1.100 3 2.800 3.700-.4 1.200-1 2.300-1.800 3.300-.7 1-1.500 1.900-2.600 1.900-1.200 0-1.600-.7-3-.7-1.400 0-1.800.7-2.900.7-1.200 0-2-.9-2.800-2C.7 14.300 0 12.100 0 10c0-3.300 2.100-5.100 4.200-5.100 1.200 0 2.200.8 3 .8.700 0 1.900-.9 3.300-.9 1.200 0 3 .5 4.300 1.300z"/></svg>
        <span class="bold">Finder</span><span>Fichier</span><span>Modifier</span><span>Présentation</span><span>Aller</span><span>Fenêtre</span><span>Aide</span>
        <div class="status">
          <svg viewBox="0 0 10 10"><rect x=".7" y=".7" width="8.600" height="8.600"/><path d="M2 7l2-2 1.500 1.500L8 3"/></svg>
          <svg class="ink" viewBox="0 0 10 10"><rect x="1" y="1" width="8" height="5"/><path d="M0 7h10v2.500H0z" fill="#123a63"/></svg>
          <svg viewBox="0 0 10 10"><path d="M.6 3.500 5 8.500 9.400 3.500Q5 .6.600 3.500z"/></svg>
          <svg class="dim" viewBox="0 0 10 10"><path d="M2 1l6 8M7 2 3 6"/></svg>
          <svg viewBox="0 0 10 10"><rect x=".7" y="1.200" width="8.600" height="7.600"/><path d="M.7 3h8.600M5 4.500l2 3M7 4.500l-2 3"/></svg>
          <svg viewBox="0 0 10 10"><circle cx="4.300" cy="4.300" r="3"/><path d="M6.500 6.500 9.300 9.300" stroke-width="1.200"/></svg>
          <svg viewBox="0 0 10 10"><rect x="1" y="1" width="8" height="3.400" rx="1.200" fill="#fff"/><rect x="1" y="5.600" width="8" height="3.400" rx="1.200"/></svg>
          <svg class="siri" viewBox="0 0 10 10"><circle cx="5" cy="5" r="4.300" fill="#3a2a70"/><circle cx="5" cy="4" r="2" fill="#e85a8a"/><circle cx="5" cy="6" r="1.400" fill="#d8d8ee"/></svg>
          <span class="clock">Jeu. 00:33</span>
        </div>
      </div>

      <div class="dock">
        ${dockIcons.map((ic, i) => html`<div class="di ${[0, 2, 3, 19].includes(i) ? 'run' : ''}">${ic}</div>`)}
        <div class="sep"></div>
        ${dockTail.map((ic) => html`<div class="di tail">${ic}</div>`)}
      </div>

      ${this.adminWin()}
      ${this.bootWin()}
      ${this.diskWin()}
      ${this.bsWin()}
      ${this.plainWin('w-system', 'System', false, grayFolder, html`<div class="grid g-sys">${this.item(folder(), ['Library'], true)}</div>`)}
      ${this.plainWin('w-golden', 'GoldenSeed20A4299v.x86_64SURamDisk', false, dmgIcon, html`<div class="grid g-golden">
        ${mnt.map((m) => this.item(folder(), [m]))}
        ${this.item(folder(), ['System'], true)}
      </div>`)}
      ${this.plainWin('w-library', 'Library', true, blueFolder, html`<div class="grid g-lib">
        ${libraryItems.map((l) => this.item(folder(), l))}
      </div>`)}
    </div>`;
  }
}
